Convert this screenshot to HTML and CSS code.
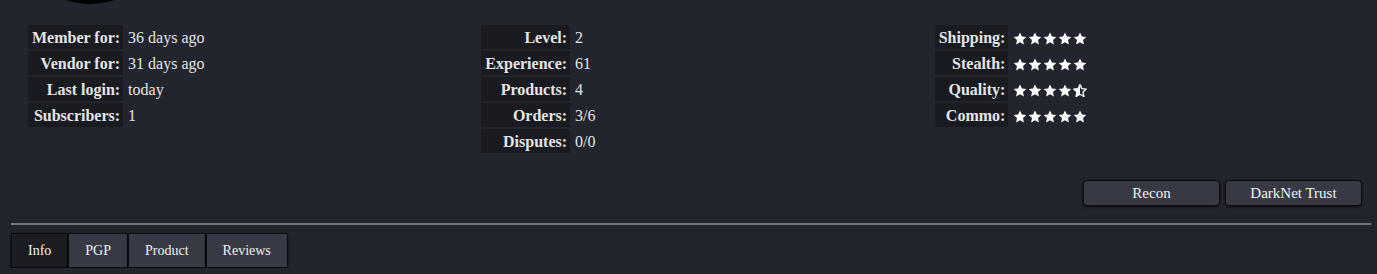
FILE: index.html
```html
<!DOCTYPE html>
<html lang="en">
<head>
    <meta charset="UTF-8">
    <title>Vendor Profile</title>
    <link rel="stylesheet" href="styles.css">
</head>
<body>
    <svg width="0" height="0" class="defs">
        <defs>
            <path id="star" d="M7 0.6 L8.9 4.6 L13.3 5.1 L10 8.1 L10.9 12.5 L7 10.3 L3.1 12.5 L4 8.1 L0.7 5.1 L5.1 4.6 Z"/>
        </defs>
    </svg>
    <div class="profile">
        <div class="avatar"></div>

        <div class="stats">
            <div class="col">
                <table class="info">
                    <tr><th>Member for:</th><td>36 days ago</td></tr>
                    <tr><th>Vendor for:</th><td>31 days ago</td></tr>
                    <tr><th>Last login:</th><td>today</td></tr>
                    <tr><th>Subscribers:</th><td>1</td></tr>
                </table>
            </div>
            <div class="col">
                <table class="info">
                    <tr><th>Level:</th><td>2</td></tr>
                    <tr><th>Experience:</th><td>61</td></tr>
                    <tr><th>Products:</th><td>4</td></tr>
                    <tr><th>Orders:</th><td>3/6</td></tr>
                    <tr><th>Disputes:</th><td>0/0</td></tr>
                </table>
            </div>
            <div class="col">
                <table class="info">
                    <tr><th>Shipping:</th><td class="stars">
                        <svg viewBox="0 0 14 13"><use href="#star"/></svg><svg viewBox="0 0 14 13"><use href="#star"/></svg><svg viewBox="0 0 14 13"><use href="#star"/></svg><svg viewBox="0 0 14 13"><use href="#star"/></svg><svg viewBox="0 0 14 13"><use href="#star"/></svg>
                    </td></tr>
                    <tr><th>Stealth:</th><td class="stars">
                        <svg viewBox="0 0 14 13"><use href="#star"/></svg><svg viewBox="0 0 14 13"><use href="#star"/></svg><svg viewBox="0 0 14 13"><use href="#star"/></svg><svg viewBox="0 0 14 13"><use href="#star"/></svg><svg viewBox="0 0 14 13"><use href="#star"/></svg>
                    </td></tr>
                    <tr><th>Quality:</th><td class="stars">
                        <svg viewBox="0 0 14 13"><use href="#star"/></svg><svg viewBox="0 0 14 13"><use href="#star"/></svg><svg viewBox="0 0 14 13"><use href="#star"/></svg><svg viewBox="0 0 14 13"><use href="#star"/></svg><svg viewBox="0 0 14 13" class="half"><path d="M7 0.6 L5.1 4.6 L0.7 5.1 L4 8.1 L3.1 12.5 L7 10.3 Z"/><use href="#star" class="outline"/></svg>
                    </td></tr>
                    <tr><th>Commo:</th><td class="stars">
                        <svg viewBox="0 0 14 13"><use href="#star"/></svg><svg viewBox="0 0 14 13"><use href="#star"/></svg><svg viewBox="0 0 14 13"><use href="#star"/></svg><svg viewBox="0 0 14 13"><use href="#star"/></svg><svg viewBox="0 0 14 13"><use href="#star"/></svg>
                    </td></tr>
                </table>
            </div>
        </div>

        <div class="actions">
            <button class="btn">Recon</button>
            <button class="btn">DarkNet Trust</button>
        </div>

        <hr class="divider">

        <div class="tabs">
            <div class="tab active">Info</div>
            <div class="tab">PGP</div>
            <div class="tab">Product</div>
            <div class="tab">Reviews</div>
        </div>
    </div>
</body>
</html>
```

FILE: styles.css
```css
body {
    margin: 0;
    padding: 0 6px 0 11px;
    background-color: #23252e;
    color: #e4e4e6;
    font-family: 'Liberation Serif', 'Times New Roman', serif;
    font-size: 16px;
    overflow: hidden;
}

.defs {
    position: absolute;
}

.avatar {
    width: 150px;
    height: 150px;
    margin: -146px 0 0 4px;
    border-radius: 50%;
    background-color: #000;
}

.stats {
    display: grid;
    grid-template-columns: repeat(3, 1fr);
    margin-top: 19px;
}
.col {
    padding-left: 15px;
}

.info {
    border-spacing: 2px;
}
.info th {
    background-color: #1a1b20;
    font-weight: bold;
    text-align: right;
    padding: 4px 3px 2px 4px;
    line-height: 18px;
    white-space: nowrap;
}
.info td {
    padding: 4px 4px 2px 3px;
    line-height: 18px;
    white-space: nowrap;
}

.stars {
    display: flex;
    gap: 1px;
    align-items: center;
    height: 18px;
}
.stars svg {
    width: 14px;
    height: 13px;
    fill: #fff;
}
.stars .half .outline {
    fill: none;
    stroke: #fff;
    stroke-width: 1.3;
    stroke-linejoin: round;
}

.actions {
    display: flex;
    justify-content: flex-end;
    gap: 5px;
    margin-top: 25px;
    padding-right: 9px;
}
.btn {
    width: 137px;
    height: 26px;
    background-color: #373a45;
    color: #f0f0f0;
    border: 1px solid #0b0b0e;
    border-radius: 4px;
    box-shadow: 0 1px 3px rgba(0, 0, 0, 0.7);
    font-family: 'Liberation Serif', 'Times New Roman', serif;
    font-size: 15px;
    cursor: pointer;
}

.divider {
    border: none;
    border-top: 2px solid #74757d;
    margin: 17px 0 8px;
}

.tabs {
    display: flex;
}
.tab {
    padding: 0 16px;
    height: 33px;
    line-height: 33px;
    background-color: #373a45;
    border: 1px solid #0b0b0e;
    font-size: 14px;
    color: #f0f0f0;
    box-shadow: 0 1px 3px rgba(0, 0, 0, 0.6);
    cursor: pointer;
}
.tab.active {
    background-color: #1c1d22;
}
```
